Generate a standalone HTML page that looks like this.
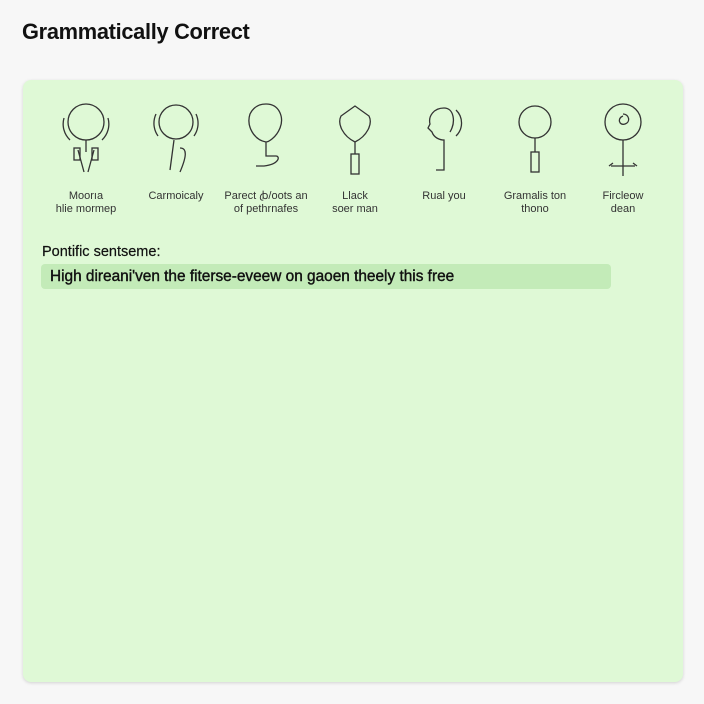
<!DOCTYPE html>
<html><head><meta charset="utf-8"><style>
body{margin:0;width:704px;height:704px;background:#f7f7f7;font-family:"Liberation Sans",sans-serif;position:relative;overflow:hidden}
h1{position:absolute;left:22px;top:19px;margin:0;font-size:21.8px;font-weight:bold;color:#111;letter-spacing:-0.3px}
.card{position:absolute;left:23px;top:80px;width:660px;height:602px;background:#dff9d6;border-radius:8px;box-shadow:0 1px 3px rgba(0,0,0,.15)}
.it{position:absolute;top:20px;width:100px;margin-left:-50px;text-align:center}
.it svg{display:block;margin:0 auto;width:60px;height:80px}
.lb{font-size:11px;line-height:13px;color:#333;margin-top:10px}
.k{position:absolute;left:19px;top:164px;font-size:14.5px;color:#111;-webkit-text-stroke:0.2px #111}
.bar{position:absolute;left:18px;top:184px;width:570px;height:25px;background:#c3ebb8;border-radius:4px;font-size:15.4px;color:#111;line-height:25px;padding-left:9px;box-sizing:border-box;-webkit-text-stroke:0.4px #111}
svg path,svg circle,svg rect{fill:none;stroke:#333;stroke-width:1.3}
</style></head><body>
<h1>Grammatically Correct</h1>
<div class="card">
<div class="it" style="left:63px"><svg viewBox="0 0 60 80"><circle cx="30" cy="22" r="18"/><path d="M8 18a22 22 0 0 0 6 22M52 18a22 22 0 0 1-6 22M30 40v12M22 50l6 22M38 50l-6 22"/><rect x="18" y="48" width="6" height="12"/><rect x="36" y="48" width="6" height="12"/></svg><div class="lb">Moorıa<br>hlie mormep</div></div>
<div class="it" style="left:153px"><svg viewBox="0 0 60 80"><circle cx="30" cy="22" r="17"/><path d="M10 14a22 22 0 0 0 2 22M50 14a22 22 0 0 1-2 22M28 40l-4 30M34 48c8 0 6 10 0 24"/></svg><div class="lb">Carmoicaly</div></div>
<div class="it" style="left:243px"><svg viewBox="0 0 60 80"><path d="M30 4c14 0 18 14 14 24-4 10-12 14-14 14-12-2-20-16-16-28 4-8 10-10 16-10zM30 42v14h10c4 0 4 8-12 10h-8"/></svg><div class="lb">Parect ꞗ/oots an<br>of pethrnafes</div></div>
<div class="it" style="left:332px"><svg viewBox="0 0 60 80"><path d="M30 6l-14 10c-4 8 2 20 14 26 12-6 18-18 14-26zM30 42v12"/><rect x="26" y="54" width="8" height="20"/></svg><div class="lb">Llack<br>soer man</div></div>
<div class="it" style="left:421px"><svg viewBox="0 0 60 80"><path d="M30 8c-10 0-16 8-14 16l-2 4 4 4c2 6 8 8 12 8v30h-8M30 8c10 0 12 14 6 24M42 10a18 18 0 0 1 0 26"/></svg><div class="lb">Rual you</div></div>
<div class="it" style="left:512px"><svg viewBox="0 0 60 80"><circle cx="30" cy="22" r="16"/><path d="M30 38v14"/><rect x="26" y="52" width="8" height="20"/></svg><div class="lb">Gramalis ton<br>thono</div></div>
<div class="it" style="left:600px"><svg viewBox="0 0 60 80"><circle cx="30" cy="22" r="18"/><path d="M30 14c6 0 8 8 2 10-6 2-8-6-2-8M30 40v36M18 66l24 0M16 66l4-3M44 66l-4-3"/></svg><div class="lb">Fircleow<br>dean</div></div>
<div class="k">Pontific sentseme:</div>
<div class="bar">High direani'ven the fiterse-eveew on gaoen theely this free</div>
</div>
</body></html>
